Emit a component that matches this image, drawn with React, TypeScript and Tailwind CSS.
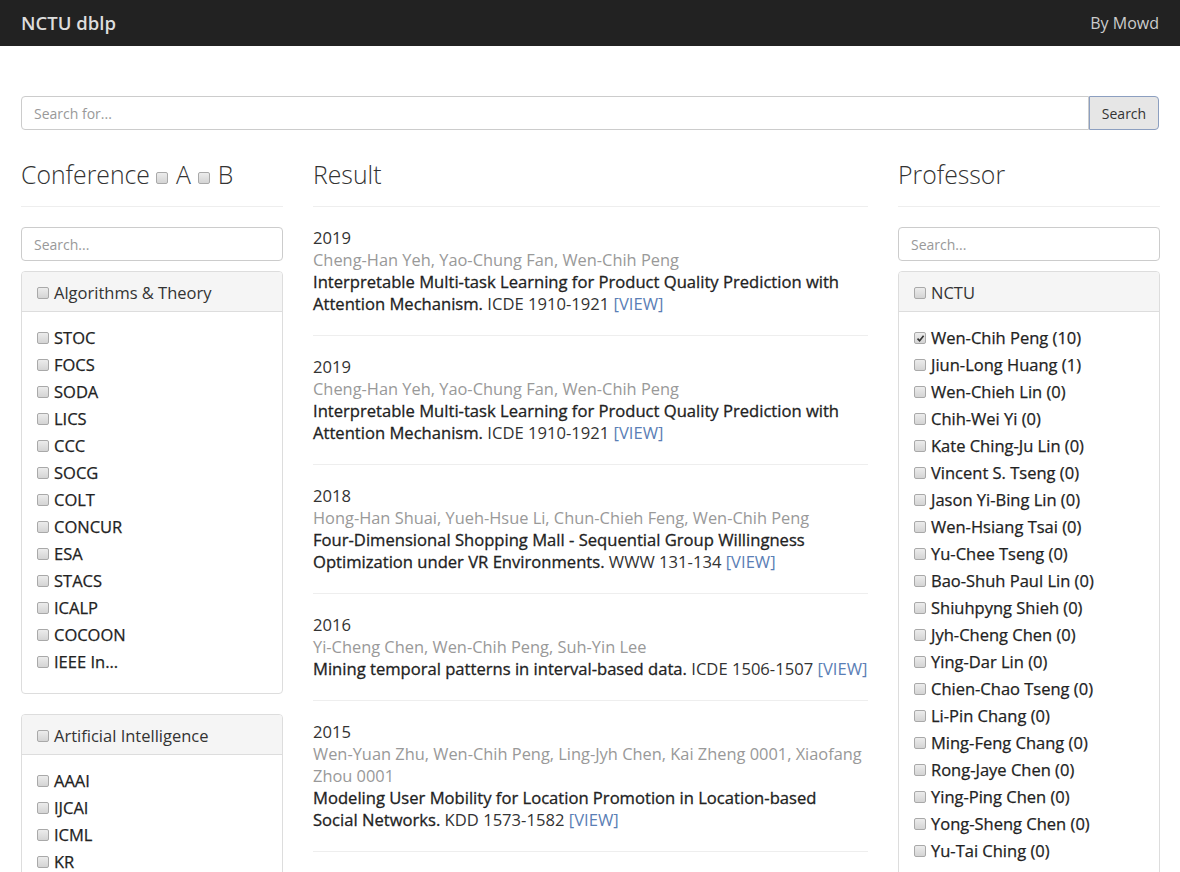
import React from 'react';

const conferenceGroups = [
   {
      name: 'Algorithms & Theory',
      items: ['STOC', 'FOCS', 'SODA', 'LICS', 'CCC', 'SOCG', 'COLT', 'CONCUR', 'ESA', 'STACS', 'ICALP', 'COCOON', 'IEEE In...']
   },
   {
      name: 'Artificial Intelligence',
      items: ['AAAI', 'IJCAI', 'ICML', 'KR', 'UAI', 'ECAI']
   }
];

const professors = [
   { name: 'Wen-Chih Peng', count: 10, checked: true },
   { name: 'Jiun-Long Huang', count: 1 },
   { name: 'Wen-Chieh Lin', count: 0 },
   { name: 'Chih-Wei Yi', count: 0 },
   { name: 'Kate Ching-Ju Lin', count: 0 },
   { name: 'Vincent S. Tseng', count: 0 },
   { name: 'Jason Yi-Bing Lin', count: 0 },
   { name: 'Wen-Hsiang Tsai', count: 0 },
   { name: 'Yu-Chee Tseng', count: 0 },
   { name: 'Bao-Shuh Paul Lin', count: 0 },
   { name: 'Shiuhpyng Shieh', count: 0 },
   { name: 'Jyh-Cheng Chen', count: 0 },
   { name: 'Ying-Dar Lin', count: 0 },
   { name: 'Chien-Chao Tseng', count: 0 },
   { name: 'Li-Pin Chang', count: 0 },
   { name: 'Ming-Feng Chang', count: 0 },
   { name: 'Rong-Jaye Chen', count: 0 },
   { name: 'Ying-Ping Chen', count: 0 },
   { name: 'Yong-Sheng Chen', count: 0 },
   { name: 'Yu-Tai Ching', count: 0 },
   { name: 'Shyan-Ming Yuan', count: 0 }
];

const results = [
   {
      year: 2019,
      authors: 'Cheng-Han Yeh, Yao-Chung Fan, Wen-Chih Peng',
      title: 'Interpretable Multi-task Learning for Product Quality Prediction with Attention Mechanism.',
      venue: 'ICDE 1910-1921'
   },
   {
      year: 2019,
      authors: 'Cheng-Han Yeh, Yao-Chung Fan, Wen-Chih Peng',
      title: 'Interpretable Multi-task Learning for Product Quality Prediction with Attention Mechanism.',
      venue: 'ICDE 1910-1921'
   },
   {
      year: 2018,
      authors: 'Hong-Han Shuai, Yueh-Hsue Li, Chun-Chieh Feng, Wen-Chih Peng',
      title: 'Four-Dimensional Shopping Mall - Sequential Group Willingness Optimization under VR Environments.',
      venue: 'WWW 131-134'
   },
   {
      year: 2016,
      authors: 'Yi-Cheng Chen, Wen-Chih Peng, Suh-Yin Lee',
      title: 'Mining temporal patterns in interval-based data.',
      venue: 'ICDE 1506-1507'
   },
   {
      year: 2015,
      authors: 'Wen-Yuan Zhu, Wen-Chih Peng, Ling-Jyh Chen, Kai Zheng 0001, Xiaofang Zhou 0001',
      title: 'Modeling User Mobility for Location Promotion in Location-based Social Networks.',
      venue: 'KDD 1573-1582',
      narrow: true
   }
];

// small gray windows-style checkbox
function Box ({ checked = false }: { checked?: boolean }) {
   return (
      <span className="inline-flex justify-center items-center bg-gradient-to-b from-[#ececec] to-[#d4d4d4] mr-[5px] border border-[#a9a9a9] rounded-[2px] w-[12px] h-[12px] shrink-0">
         {checked && (
            <svg width="9" height="9" viewBox="0 0 9 9">
               <path d="M1.5 4.6 L3.6 6.8 L7.6 1.8" fill="none" stroke="#333" strokeWidth="1.6" />
            </svg>
         )}
      </span>
   );
}

function SideInput () {
   return (
      <div className="flex items-center mb-[10px] px-[12px] border border-[#ccc] rounded-[4px] h-[34px] text-[#999] text-[14px]">
         Search...
      </div>
   );
}

function Panel ({ title, children }: { title: string; children: React.ReactNode }) {
   return (
      <div className="mb-[20px] border border-[#ddd] rounded-[4px] overflow-hidden">
         <div className="flex items-center bg-[#f5f5f5] px-[15px] pt-[3px] border-[#ddd] border-b h-[40px] text-[#333] text-[16.5px]">
            <Box />
            <span>{title}</span>
         </div>
         <div className="p-[15px]">{children}</div>
      </div>
   );
}

function Item ({ label, checked }: { label: string; checked?: boolean }) {
   return (
      <div className="flex items-center mb-[5px] h-[22px] text-[#222] text-[16.5px] [-webkit-text-stroke:0.25px_#222]">
         <Box checked={checked} />
         <span>{label}</span>
      </div>
   );
}

function Header ({ children }: { children: React.ReactNode }) {
   return (
      <div className="flex items-center mb-[20px] pb-[16px] border-[#eee] border-b h-[47px] font-light text-[#333] text-[24.8px]">
         {children}
      </div>
   );
}

export default function App () {
   return (
      <div className="bg-white h-[872px] overflow-hidden" style={{ fontFamily: '"Open Sans", "Noto Sans", sans-serif' }}>
         <div className="flex justify-between items-center bg-[#222] px-[21px] h-[46px]">
            <span className="font-semibold text-[#ddd] text-[18.5px]">NCTU dblp</span>
            <span className="text-[#ccc] text-[16px]">By Mowd</span>
         </div>

         <div className="px-[21px] pt-[50px]">
            <div className="flex h-[34px]">
               <div className="flex flex-1 items-center px-[12px] border border-[#ccc] rounded-l-[4px] text-[#999] text-[14px]">
                  Search for...
               </div>
               <div className="flex justify-center items-center bg-[#e6e6e6] border border-[#8c9fc0] rounded-r-[4px] w-[70px] text-[#333] text-[14px]">
                  Search
               </div>
            </div>

            <div className="gap-x-[30px] grid grid-cols-[262px_555px_262px] mt-[30px]">
               <div>
                  <Header>
                     <span>Conference</span>
                     <span className="ml-[6px] mr-[3px]"><Box /></span>
                     <span>A</span>
                     <span className="ml-[7px] mr-[3px]"><Box /></span>
                     <span>B</span>
                  </Header>
                  <SideInput />
                  {conferenceGroups.map((g) => (
                     <Panel key={g.name} title={g.name}>
                        {g.items.map((c) => <Item key={c} label={c} />)}
                     </Panel>
                  ))}
               </div>

               <div>
                  <div className="flex items-center pb-[16px] border-[#eee] border-b h-[47px] font-light text-[#333] text-[24.8px]">
                     Result
                  </div>
                  {results.map((r, i) => (
                     <div key={i} className="py-[20px] border-[#eee] border-b text-[16.6px] leading-[22px]">
                        <div className="text-[#333]">{r.year}</div>
                        <div className="text-[#999] text-[16.4px]">{r.authors}</div>
                        <div className={`text-[#333] ${r.narrow ? 'pr-[14px]' : ''}`}>
                           <span className="text-[#222] [-webkit-text-stroke:0.3px_#222]">{r.title}</span>{' '}
                           <span>{r.venue}</span>{' '}
                           <span className="text-[#5a7eb5]">[VIEW]</span>
                        </div>
                     </div>
                  ))}
               </div>

               <div>
                  <Header>Professor</Header>
                  <SideInput />
                  <Panel title="NCTU">
                     {professors.map((p) => (
                        <Item key={p.name} label={`${p.name} (${p.count})`} checked={p.checked} />
                     ))}
                  </Panel>
               </div>
            </div>
         </div>
      </div>
   );
}
